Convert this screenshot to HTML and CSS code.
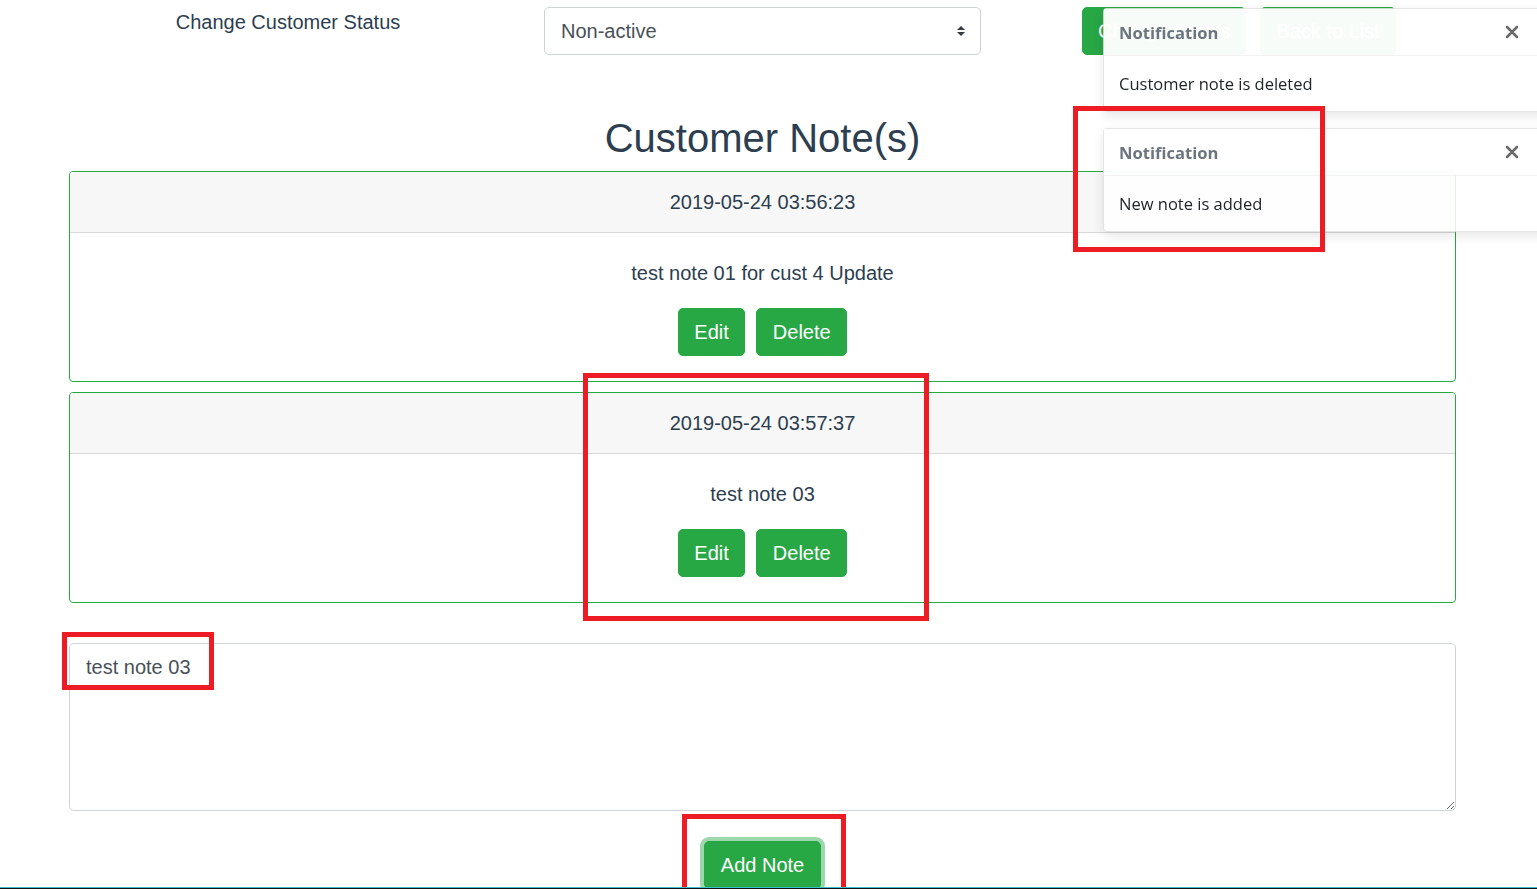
FILE: index.html
```html
<!DOCTYPE html>
<html lang="en">
<head>
<meta charset="utf-8">
<title>Customer Notes</title>
<link rel="stylesheet" href="styles.css">
</head>
<body>
<div class="page">
  <div class="status-row">
    <div class="status-label">Change Customer Status</div>
    <div class="select-wrap">
      <select class="status-select"><option>Non-active</option></select>
      <svg class="select-caret" width="10" height="12" viewBox="0 0 10 12"><path d="M1 5 L5 1 L9 5 Z M1 7 L5 11 L9 7 Z" fill="#343a40"/></svg>
    </div>
    <div class="status-actions">
      <button class="btn">Change Status</button>
      <button class="btn">Back to List</button>
    </div>
  </div>

  <h1 class="title">Customer Note(s)</h1>

  <div class="notes">
    <div class="note-card">
      <div class="note-head">2019-05-24 03:56:23</div>
      <div class="note-body">
        <p class="note-text">test note 01 for cust 4 Update</p>
        <div class="note-actions">
          <button class="btn">Edit</button>
          <button class="btn">Delete</button>
        </div>
      </div>
    </div>
    <div class="note-card">
      <div class="note-head">2019-05-24 03:57:37</div>
      <div class="note-body">
        <p class="note-text">test note 03</p>
        <div class="note-actions">
          <button class="btn">Edit</button>
          <button class="btn">Delete</button>
        </div>
      </div>
    </div>
  </div>

  <textarea class="note-input">test note 03</textarea>

  <div class="add-row">
    <button class="btn btn-focus">Add Note</button>
  </div>
</div>

<div class="toasts">
  <div class="toast">
    <div class="toast-head">
      <strong class="toast-title">Notification</strong>
      <svg class="toast-close" width="14" height="14" viewBox="0 0 14 14"><path d="M2 2 L12 12 M12 2 L2 12" stroke="#6b6b6b" stroke-width="2.6" stroke-linecap="round"/></svg>
    </div>
    <div class="toast-body">Customer note is deleted</div>
  </div>
  <div class="toast">
    <div class="toast-head">
      <strong class="toast-title">Notification</strong>
      <svg class="toast-close" width="14" height="14" viewBox="0 0 14 14"><path d="M2 2 L12 12 M12 2 L2 12" stroke="#6b6b6b" stroke-width="2.6" stroke-linecap="round"/></svg>
    </div>
    <div class="toast-body">New note is added</div>
  </div>
</div>

<div class="mark mark-toast"></div>
<div class="mark mark-card"></div>
<div class="mark mark-input"></div>
<div class="mark mark-button"></div>

<div class="footer-line"></div>
</body>
</html>
```

FILE: styles.css
```css
html, body {
  margin: 0;
  padding: 0;
  overflow: hidden;
  height: 889px;
  background: #fff;
}

body {
  font-family: "Liberation Sans", Arial, sans-serif;
  color: #2c3e50;
}

.page {
  width: 1387px;
  margin-left: 69px;
}

/* ---------- top status row ---------- */
.status-row {
  display: flex;
  align-items: flex-start;
}

.status-label {
  width: 438px;
  margin-top: 7px;
  font-size: 20px;
  line-height: 30px;
  text-align: center;
  color: #2c3e50;
}

.select-wrap {
  position: relative;
  width: 437px;
  margin-left: 37px;
  margin-top: 7px;
}

.status-select {
  display: block;
  width: 100%;
  height: 48px;
  box-sizing: border-box;
  padding: 0 16px;
  font-family: "Liberation Sans", Arial, sans-serif;
  font-size: 20px;
  color: #495057;
  background: #fff;
  border: 1px solid #ced4da;
  border-radius: 5px;
  -webkit-appearance: none;
  appearance: none;
  outline: none;
}

.select-caret {
  position: absolute;
  right: 15px;
  top: 18px;
  pointer-events: none;
}

.status-actions {
  display: flex;
  gap: 14px;
  margin-left: 101px;
  margin-top: 7px;
}

.status-actions .btn {
  padding: 0 15px;
}

/* ---------- buttons ---------- */
.btn {
  height: 48px;
  padding: 0 15.5px;
  font-family: "Liberation Sans", Arial, sans-serif;
  font-size: 20px;
  line-height: 46px;
  color: #fff;
  background: #28a745;
  border: 1px solid #28a745;
  border-radius: 5px;
  cursor: pointer;
}

.btn-focus {
  box-shadow: 0 0 0 4px rgba(40, 167, 69, 0.45);
}

/* ---------- heading ---------- */
.title {
  margin: 59px 0 9px;
  font-size: 40px;
  font-weight: 400;
  line-height: 48px;
  text-align: center;
  color: #2c3e50;
}

/* ---------- note cards ---------- */
.notes {
  display: flex;
  flex-direction: column;
  gap: 10px;
  margin-bottom: 40px;
}

.note-card {
  border: 1px solid #28a745;
  border-radius: 4px;
  overflow: hidden;
}

.note-head {
  padding: 15px 20px;
  font-size: 20px;
  line-height: 30px;
  text-align: center;
  background: #f7f7f7;
  border-bottom: 1px solid #d9d9d9;
}

.note-body {
  padding: 25px 20px 25px;
  text-align: center;
}

.note-text {
  margin: 0 0 20px;
  font-size: 20px;
  line-height: 30px;
}

.note-actions {
  display: flex;
  justify-content: center;
  gap: 11px;
}

/* ---------- textarea ---------- */
.note-input {
  display: block;
  width: 100%;
  height: 168px;
  box-sizing: border-box;
  margin: 0;
  padding: 8px 16px;
  font-family: "Liberation Sans", Arial, sans-serif;
  font-size: 20px;
  line-height: 30px;
  color: #495057;
  border: 1px solid #ced4da;
  border-radius: 5px;
  outline: none;
}

.add-row {
  display: flex;
  justify-content: center;
  margin-top: 30px;
}

/* ---------- toasts ---------- */
.toasts {
  position: fixed;
  top: 8px;
  left: 1103px;
  width: 470px;
  display: flex;
  flex-direction: column;
  gap: 16px;
}

.toast {
  background: rgba(255, 255, 255, 0.85);
  border: 1px solid rgba(0, 0, 0, 0.1);
  border-radius: 4px;
  box-shadow: 0 4px 12px rgba(0, 0, 0, 0.1);
  font-family: "Open Sans", "Noto Sans", sans-serif;
}

.toast-head {
  position: relative;
  display: flex;
  align-items: center;
  height: 46px;
  padding: 0 15px;
  background: rgba(255, 255, 255, 0.75);
  border-bottom: 1px solid rgba(0, 0, 0, 0.05);
  color: #6c757d;
}

.toast-title {
  font-size: 16.6px;
  font-weight: 700;
}

.toast-close {
  position: absolute;
  left: 401px;
  top: 16px;
}

.toast-body {
  height: 55px;
  padding: 0 15px;
  display: flex;
  align-items: center;
  font-size: 16.5px;
  color: #212529;
}

/* ---------- red annotation boxes ---------- */
.mark {
  position: absolute;
  border: 5px solid #ed1c24;
  box-sizing: border-box;
  pointer-events: none;
}

.mark-toast {
  left: 1073px;
  top: 106px;
  width: 252px;
  height: 146px;
}

.mark-card {
  left: 583px;
  top: 373px;
  width: 346px;
  height: 248px;
}

.mark-input {
  left: 62px;
  top: 632px;
  width: 152px;
  height: 58px;
}

.mark-button {
  left: 682px;
  top: 814px;
  width: 164px;
  height: 90px;
}

.footer-line {
  position: fixed;
  left: 0;
  right: 0;
  bottom: 0;
  height: 2px;
  background: #111;
  border-top: 1px solid #3bbfd0;
  box-sizing: border-box;
}
```
